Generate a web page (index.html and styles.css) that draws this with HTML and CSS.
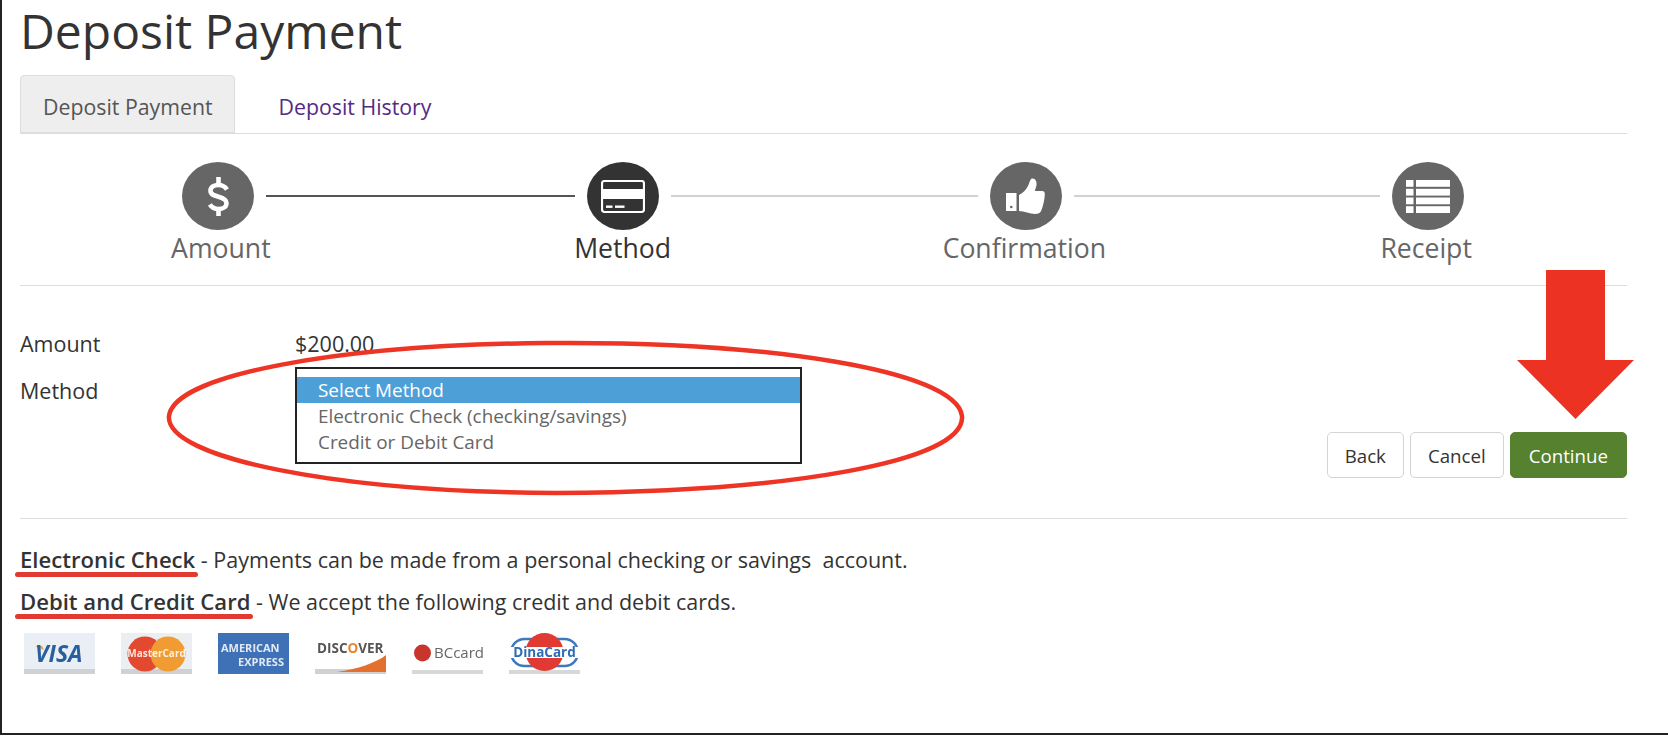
FILE: index.html
```html
<!DOCTYPE html>
<html lang="en">
<head>
  <meta charset="UTF-8" />
  <title>Deposit Payment</title>
  <link rel="stylesheet" href="styles.css">
</head>
<body>
  <div class="frame">
    <h1>Deposit Payment</h1>

    <div class="tabs">
      <a class="tab active">Deposit Payment</a>
      <a class="tab">Deposit History</a>
    </div>

    <div class="steps">
      <div class="step-icons">
        <span class="circle">
          <svg width="23" height="41" viewBox="0 0 23 41"><path d="M20 13.500C18 10.500 15 9 11.500 9 7 9 3.500 11 3.500 14.800 3.500 18.500 7 19.500 11.500 20.800 16 22 19.500 23.500 19.500 27.200 19.500 30.800 16 33 11.500 33 8 33 4.800 31.500 2.800 28.500" fill="none" stroke="#fff" stroke-width="4.600"/><rect x="9.200" y="1" width="4.600" height="7" fill="#fff"/><rect x="9.200" y="33" width="4.600" height="7" fill="#fff"/></svg>
        </span>
        <span class="line done"></span>
        <span class="circle current">
          <svg width="44" height="33" viewBox="0 0 44 33"><rect x="1" y="1" width="42" height="31" rx="2.500" fill="none" stroke="#fff" stroke-width="2.200"/><rect x="2" y="9" width="40" height="10" fill="#fff"/><rect x="5" y="25.500" width="6.500" height="2.400" fill="#fff"/><rect x="14" y="25.500" width="9.500" height="2.400" fill="#fff"/></svg>
        </span>
        <span class="line"></span>
        <span class="circle">
          <svg width="39" height="36" viewBox="0 0 39 36"><rect y="15" width="10.500" height="18" fill="#fff"/><circle cx="5.300" cy="29" r="1.300" fill="#666"/><path d="M13 17C17 15 20 12 22 8 23.500 5 24 1 26 .5 29 0 31 3 30.500 7 30 10 29 11 29 13L36 13C38.500 13 39 15 38.800 17 38.500 22 37 28 35.500 32 34.500 35 32 36 29 36 24 36 18 33 13 33Z" fill="#fff"/></svg>
        </span>
        <span class="line"></span>
        <span class="circle">
          <svg width="44" height="33" viewBox="0 0 44 33" fill="#fff"><rect width="7.500" height="6.800"/><rect x="10" width="34" height="6.800"/><rect y="8.800" width="7.500" height="6.800"/><rect x="10" y="8.800" width="34" height="6.800"/><rect y="17.500" width="7.500" height="6.800"/><rect x="10" y="17.500" width="34" height="6.800"/><rect y="26.200" width="7.500" height="6.800"/><rect x="10" y="26.200" width="34" height="6.800"/></svg>
        </span>
      </div>
      <div class="step-labels">
        <span>Amount</span>
        <span class="current">Method</span>
        <span>Confirmation</span>
        <span>Receipt</span>
      </div>
    </div>

    <div class="form-area">
      <div class="fields">
        <div class="field">
          <label>Amount</label>
          <span>$200.00</span>
        </div>
        <div class="field">
          <label class="method-label">Method</label>
          <ul class="method-list">
            <li class="selected">Select Method</li>
            <li>Electronic Check (checking/savings)</li>
            <li>Credit or Debit Card</li>
          </ul>
        </div>
      </div>
      <div class="actions">
        <button class="btn">Back</button>
        <button class="btn">Cancel</button>
        <button class="btn primary">Continue</button>
      </div>
    </div>

    <div class="notes">
      <p><strong class="mark">Electronic Check</strong> - Payments can be made from a personal checking or savings&nbsp; account.</p>
      <p><strong class="mark">Debit and Credit Card</strong> - We accept the following credit and debit cards.</p>
      <div class="cards">
        <svg class="card" viewBox="0 0 71 41">
          <rect width="71" height="37" fill="#e9eff5"/><rect y="36" width="71" height="5" fill="#cfd2d4"/>
          <path d="M11 13l7 0 2 4z" fill="#e9a23b"/>
          <text x="11" y="29" class="visa">VISA</text>
        </svg>
        <svg class="card" viewBox="0 0 71 41">
          <rect width="71" height="37" fill="#eceff2"/><rect y="36" width="71" height="5" fill="#cfd2d4"/>
          <circle cx="24" cy="21" r="17.500" fill="#e2492f"/><circle cx="47" cy="21" r="17.500" fill="#f09c33"/>
          <text x="35.500" y="24" class="mc">MasterCard</text>
        </svg>
        <svg class="card" viewBox="0 0 71 41">
          <rect width="71" height="41" fill="#3f71b7"/>
          <text x="3" y="19" class="amex">AMERICAN</text>
          <text x="66" y="33" class="amex end">EXPRESS</text>
        </svg>
        <svg class="card" viewBox="0 0 71 41">
          <rect y="36" width="71" height="5" fill="#cfd2d4"/>
          <path d="M22 39C42 36 61 30 71 22L71 39Z" fill="#e4702e"/>
          <text x="2" y="20" class="discover">DISC<tspan fill="#e8852f">O</tspan>VER</text>
        </svg>
        <svg class="card" viewBox="0 0 71 41">
          <rect y="37" width="71" height="4" fill="#d6d8d9"/>
          <circle cx="10.500" cy="20" r="8.500" fill="#c7352d"/>
          <text x="22" y="25" class="bc">BCcard</text>
        </svg>
        <svg class="card" viewBox="0 0 71 41">
          <rect y="37" width="71" height="4" fill="#d6d8d9"/>
          <rect x="2" y="6" width="67" height="27" rx="13.500" fill="none" stroke="#3f78bd" stroke-width="2.500"/>
          <circle cx="35.500" cy="19" r="19" fill="#e03a32"/>
          <rect x="0" y="14" width="71" height="11" fill="#fff"/>
          <text x="35.500" y="23.500" class="dina">DinaCard</text>
        </svg>
      </div>
    </div>

    <!-- red annotations drawn on top of the page -->
    <svg class="ring" width="800" height="156" viewBox="0 0 800 156"><path d="M3 76C8 35 170 5 380 3 600 1 790 30 796 76 800 122 620 152 390 153 170 152 -1 118 3 76Z" fill="none" stroke="#ee3424" stroke-width="4.500"/></svg>
    <svg class="arrow" width="117" height="149" viewBox="0 0 117 149"><path d="M29 0H88V90H117L58.500 149 0 90H29Z" fill="#ec3323"/></svg>
  </div>
</body>
</html>
```

FILE: styles.css
```css
* {
  box-sizing: border-box;
}
body {
  margin: 0;
  background: #fff;
  color: #333;
  font-family: 'Open Sans', sans-serif;
  font-size: 21.500px;
  line-height: 26px;
}
.frame {
  position: relative;
  height: 735px;
  padding: 0 41px 0 18px;
  border-left: 2px solid #222;
  border-bottom: 2px solid #222;
}
h1 {
  margin: 0;
  height: 75px;
  font-size: 48px;
  font-weight: 400;
  line-height: 62px;
  white-space: nowrap;
}
.tabs {
  display: flex;
  height: 59px;
  border-bottom: 1px solid #ddd;
}
.tab {
  padding: 18px 22px 0;
  border: 1px solid transparent;
  border-radius: 4px 4px 0 0;
  font-size: 21.300px;
  color: #552a86;
}
.tab.active {
  padding-right: 21px;
  background: #eee;
  border-color: #ddd;
  color: #555;
  margin-right: 21px;
}
.steps {
  height: 152px;
  border-bottom: 1px solid #ddd;
}
.step-icons {
  display: flex;
  align-items: center;
  padding: 28px 0 0 162px;
}
.circle {
  flex: none;
  display: flex;
  align-items: center;
  justify-content: center;
  width: 72px;
  height: 68px;
  border-radius: 50%;
  background: #666;
}
.circle.current {
  background: #333;
}
.line {
  flex: none;
  width: 306.500px;
  height: 2px;
  margin: 0 12px;
  background: #d2d2d2;
}
.line.done {
  width: 309px;
  background: #555;
}
.step-labels {
  display: grid;
  grid-template-columns: repeat(4, 1fr);
  text-align: center;
  font-size: 26.600px;
  line-height: 36px;
  color: #666;
}
.step-labels .current {
  color: #333;
}
.form-area {
  display: flex;
  justify-content: space-between;
  align-items: flex-end;
  height: 233px;
  padding: 45px 0 40px;
  border-bottom: 1px solid #ddd;
}
.fields {
  align-self: flex-start;
}
.field {
  display: flex;
  margin-bottom: 10px;
}
.field label {
  width: 275px;
}
.method-label {
  padding-top: 11px;
}
.method-list {
  width: 507px;
  margin: 0;
  padding: 8px 0 7px;
  list-style: none;
  border: 2px solid #222;
  font-size: 18.900px;
  color: #666;
}
.method-list li {
  height: 26px;
  padding-left: 21px;
}
.method-list .selected {
  background: #4d9fd8;
  color: #fff;
}
.actions {
  display: flex;
  gap: 6px;
}
.btn {
  height: 46px;
  padding: 0 17px;
  background: #fff;
  border: 1px solid #d4d4d4;
  border-radius: 5px;
  font: 18.700px 'Open Sans', sans-serif;
  color: #333;
}
.btn.primary {
  padding: 0 18px;
  background: #56812f;
  border-color: #56812f;
  color: #fff;
}
.notes {
  padding-top: 27px;
}
.notes p {
  margin: 0 0 15px;
  white-space: nowrap;
}
.notes strong {
  font-size: 22.100px;
  font-weight: 600;
}
.mark {
  position: relative;
}
.mark::after {
  content: "";
  position: absolute;
  left: -5px;
  right: -3px;
  bottom: -3px;
  height: 5px;
  border-radius: 3px;
  background: #e03a32;
}
.cards {
  display: flex;
  gap: 26px;
  margin-top: 18px;
  padding-left: 4px;
}
.card {
  width: 71px;
  height: 41px;
  font-family: 'Open Sans', sans-serif;
  filter: blur(0.5px);
}
.visa {
  font-size: 23px;
  font-weight: 700;
  font-style: italic;
  fill: #2a5f9e;
}
.mc {
  font-size: 10px;
  font-weight: 700;
  fill: #fff;
  opacity: 0.85;
  text-anchor: middle;
}
.amex {
  font-size: 11px;
  font-weight: 700;
  fill: #fff;
  opacity: 0.85;
}
.amex.end {
  text-anchor: end;
}
.discover {
  font-size: 13.500px;
  font-weight: 700;
  fill: #555;
}
.bc {
  font-size: 15px;
  fill: #666;
}
.dina {
  font-size: 13.500px;
  font-weight: 700;
  fill: #2f6cb3;
  text-anchor: middle;
}
.ring {
  position: absolute;
  left: 164px;
  top: 340px;
}
.arrow {
  position: absolute;
  left: 1515px;
  top: 270px;
}
```
